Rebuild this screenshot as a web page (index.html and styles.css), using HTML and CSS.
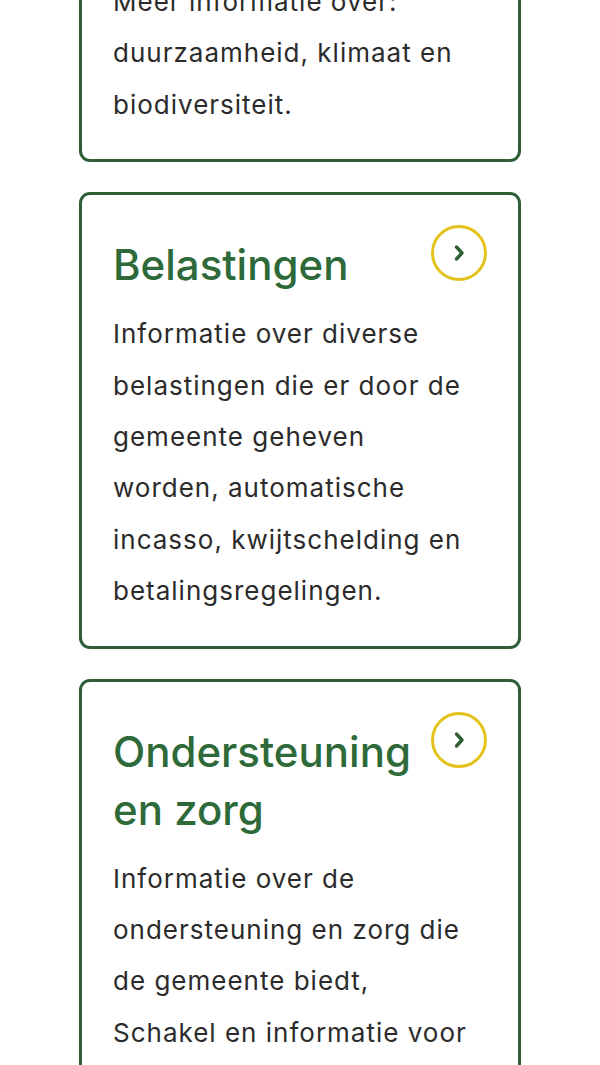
FILE: index.html
```html
<!DOCTYPE html>
<html lang="nl">
<head>
<meta charset="utf-8">
<title>Onderwerpen</title>
<link rel="stylesheet" href="styles.css">
</head>
<body>
<main class="cards">
  <a class="card" href="#">
    <div class="card-head">
      <h2 class="card-title">Duurzaamheid</h2>
      <span class="card-icon" aria-hidden="true">
        <svg viewBox="0 0 56 56" width="56" height="56"><circle cx="28" cy="28" r="26.5" fill="none" stroke="#e4c21c" stroke-width="3"/><path d="M25.5 22 L31 28 L25.5 34" fill="none" stroke="#2e5e36" stroke-width="3.4" stroke-linecap="round" stroke-linejoin="round"/></svg>
      </span>
    </div>
    <p class="card-text">Meer informatie over: duurzaamheid, klimaat en biodiversiteit.</p>
  </a>
  <a class="card" href="#">
    <div class="card-head">
      <h2 class="card-title">Belastingen</h2>
      <span class="card-icon" aria-hidden="true">
        <svg viewBox="0 0 56 56" width="56" height="56"><circle cx="28" cy="28" r="26.5" fill="none" stroke="#e4c21c" stroke-width="3"/><path d="M25.5 22 L31 28 L25.5 34" fill="none" stroke="#2e5e36" stroke-width="3.4" stroke-linecap="round" stroke-linejoin="round"/></svg>
      </span>
    </div>
    <p class="card-text">Informatie over diverse belastingen die er door de gemeente geheven worden, automatische incasso, kwijtschelding en betalingsregelingen.</p>
  </a>
  <a class="card" href="#">
    <div class="card-head">
      <h2 class="card-title">Ondersteuning en zorg</h2>
      <span class="card-icon" aria-hidden="true">
        <svg viewBox="0 0 56 56" width="56" height="56"><circle cx="28" cy="28" r="26.5" fill="none" stroke="#e4c21c" stroke-width="3"/><path d="M25.5 22 L31 28 L25.5 34" fill="none" stroke="#2e5e36" stroke-width="3.4" stroke-linecap="round" stroke-linejoin="round"/></svg>
      </span>
    </div>
    <p class="card-text">Informatie over de ondersteuning en zorg die de gemeente biedt, Schakel en informatie voor inwoners die hulp nodig hebben.</p>
  </a>
</main>
</body>
</html>
```
FILE: styles.css
```css
html, body {
  margin: 0;
  padding: 0;
  background: #ffffff;
}

body {
  font-family: "Inter", "Noto Sans", sans-serif;
  color: #2b2b2b;
}

.cards {
  display: flex;
  flex-direction: column;
  gap: 30px;
  padding: 0 79px;
  margin-top: -140px;
}

.card {
  display: block;
  text-decoration: none;
  color: inherit;
  border: 3px solid #2e5e36;
  border-radius: 11px;
  padding: 29px 31px 29px 31px;
}

.card-head {
  display: flex;
  align-items: flex-start;
  justify-content: space-between;
  gap: 18px;
}

.card-title {
  margin: 12px 0 0 0;
  font-size: 42px;
  line-height: 58px;
  font-weight: 500;
  color: #2e6a39;
}

.card-icon {
  flex: 0 0 56px;
  width: 56px;
  height: 56px;
  display: block;
  margin-top: 1px;
}

.card-icon svg {
  display: block;
}

.card-text {
  margin: 14px 12px 0 0;
  font-size: 26px;
  line-height: 51.4px;
  letter-spacing: 1px;
}
```
